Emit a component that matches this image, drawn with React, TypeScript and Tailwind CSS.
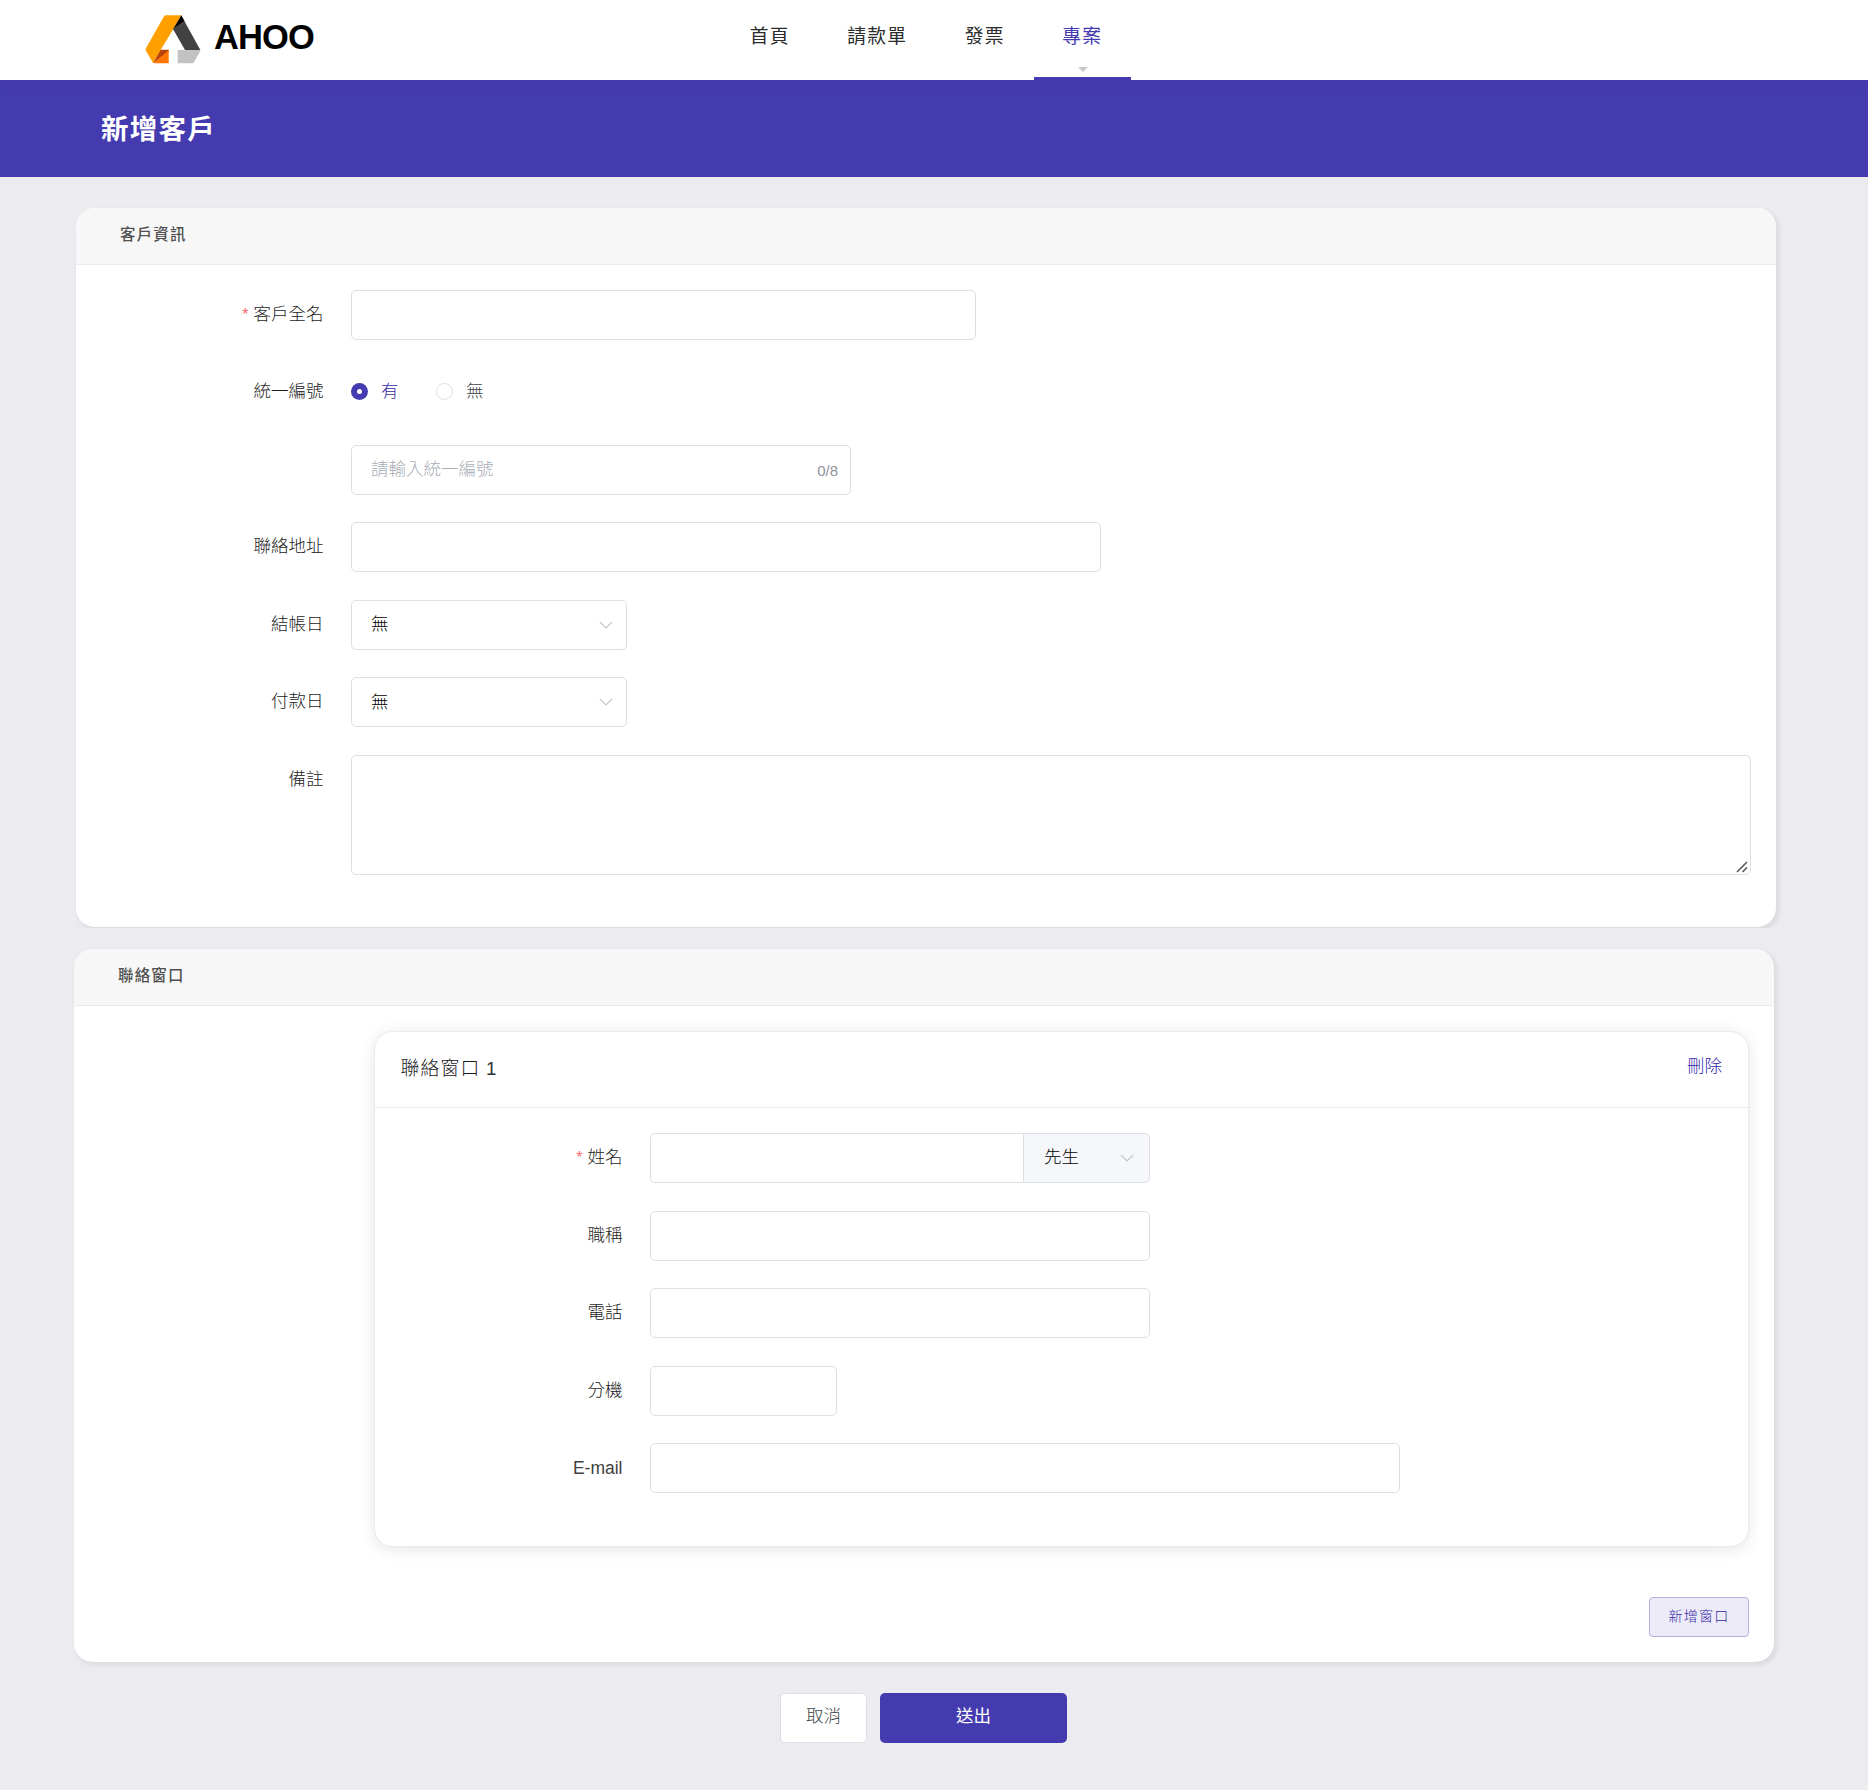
import type { ReactNode } from 'react';

const inputClass =
  'block h-[50px] rounded-[5px] border border-[#dcdfe6] bg-white px-[19px] text-[17.5px] text-[#303133] outline-none placeholder:text-[#c0c4cc]';

function Logo() {
  return (
    <div className="flex h-[50px] w-[180px]">
      <svg width="56" height="50" viewBox="0 0 168 150" className="mt-px shrink-0">
        <path d="M61 1H109L85 42L47 105L24 144L2 106V101L57 4Z" fill="#ff9f00" />
        <path d="M47 104H71V110L24 145Z" fill="#b8420c" />
        <path d="M71 106V145H25Z" fill="#ff7600" />
        <path d="M109 1L119 19L84 43Z" fill="#000" />
        <path d="M118 18L166 105H120L84 42Z" fill="#424242" />
        <path d="M98 105H166V108L146 143L142 145H98Z" fill="#c2c2c2" />
      </svg>
      <span className="mt-[5px] ml-[13px] text-[34.5px] leading-[36px] font-bold tracking-[-0.9px] text-black">AHOO</span>
    </div>
  );
}

function NavItem({ label, active = false }: { label: string; active?: boolean }) {
  return (
    <a
      className={
        active
          ? 'relative h-20 border-b-[3px] border-[#453bb0] px-[28.75px] pt-[23px] text-[#453bb0]'
          : 'h-20 px-[28.75px] pt-[23px] text-[#2c2c2c]'
      }
    >
      {label}
      {active && (
        <span className="absolute top-[67px] left-1/2 -ml-[4px] border-x-[5px] border-t-[5px] border-x-transparent border-t-[#c8c8c8]" />
      )}
    </a>
  );
}

function Field({
  label,
  required = false,
  labelWidth,
  children,
}: {
  label?: ReactNode;
  required?: boolean;
  labelWidth: string;
  children: ReactNode;
}) {
  return (
    <div className="mb-[27.5px] flex">
      <div className={`${labelWidth} shrink-0 pr-[27.5px] text-right text-[17.5px] leading-[48px] text-[#1c1c1c]`}>
        {required && <span className="mr-[5px] text-[16px] text-[#f56c6c]">*</span>}
        {label}
      </div>
      {children}
    </div>
  );
}

function Chevron() {
  return (
    <svg width="14" height="8" viewBox="0 0 14 8" fill="none" stroke="#c0c4cc" strokeWidth="1.2" className="shrink-0">
      <path d="M0.8 0.8L7 7L13.2 0.8" />
    </svg>
  );
}

function Select({ value }: { value: string }) {
  return (
    <button className="flex h-[50px] w-[276px] items-center justify-between rounded-[5px] border border-[#dcdfe6] bg-white pr-[13px] pl-[19px] text-[17.5px] text-black">
      <span className="-mt-px">{value}</span>
      <Chevron />
    </button>
  );
}

function Panel({ title, className, children }: { title: string; className: string; children: ReactNode }) {
  return (
    <section
      className={`${className} w-[1700px] overflow-hidden rounded-[19px] bg-white shadow-[2.5px_2.5px_5px_rgba(0,0,0,0.08)]`}
    >
      <h2 className="h-[57px] border-b border-[#ebebeb] bg-[#f7f7f7] pl-11 text-[15.4px] leading-[53px] font-medium tracking-[1.25px] text-[#505050]">
        {title}
      </h2>
      {children}
    </section>
  );
}

export default function App() {
  return (
    <div className="h-[1790px] w-[1868px] overflow-hidden bg-[#ecebf0] font-['Liberation_Sans','Noto_Sans_CJK_TC',sans-serif] font-light">
      <header className="relative flex h-20 bg-white pl-[145px] shadow-[0_2.5px_15px_rgba(0,0,0,0.06)]">
        <div className="flex w-[576px] pt-[14px]">
          <Logo />
        </div>
        <nav className="flex text-[18.75px] leading-[28px] font-normal tracking-[1.25px]">
          <NavItem label="首頁" />
          <NavItem label="請款單" />
          <NavItem label="發票" />
          <NavItem label="專案" active />
        </nav>
      </header>

      <div className="h-[97px] bg-[#453bb0] pl-[101px]">
        <h1 className="text-[27.5px] leading-[99px] font-bold tracking-[1.25px] text-white">新增客戶</h1>
      </div>

      <div className="h-[751px] overflow-hidden pt-[31px] pl-[76px]">
        <Panel title="客戶資訊" className="h-[719px]">
          <div className="pt-[24.9px]">
            <Field label="客戶全名" required labelWidth="w-[275px]">
              <input className={`${inputClass} w-[625px]`} />
            </Field>
            <Field label="統一編號" labelWidth="w-[275px]">
              <div className="flex h-12 items-center text-[17.5px]">
                <span className="flex size-[17px] items-center justify-center rounded-full bg-[#453bb0]">
                  <span className="size-[5px] rounded-full bg-white" />
                </span>
                <span className="ml-[13px] text-[#3429a8]">有</span>
                <span className="ml-[37.5px] size-[17px] rounded-full border border-[#dcdfe6] bg-white" />
                <span className="ml-[13px] text-[#404246]">無</span>
              </div>
              <div className="h-[50px]" />
            </Field>
            <Field labelWidth="w-[275px]">
              <div className="flex h-[50px] w-[500px] items-center justify-between rounded-[5px] border border-[#dcdfe6] pr-3 pl-[19px]">
                <input
                  placeholder="請輸入統一編號"
                  className="-mt-px w-[300px] text-[17.5px] outline-none placeholder:text-[#a8adb7]"
                />
                <span className="pt-[2px] text-[15px] text-[#909399]">0/8</span>
              </div>
            </Field>
            <Field label="聯絡地址" labelWidth="w-[275px]">
              <input className={`${inputClass} w-[750px]`} />
            </Field>
            <Field label="結帳日" labelWidth="w-[275px]">
              <Select value="無" />
            </Field>
            <Field label="付款日" labelWidth="w-[275px]">
              <Select value="無" />
            </Field>
            <Field label="備註" labelWidth="w-[275px]">
              <div className="relative">
                <textarea className="block h-[120px] w-[1400px] resize-none rounded-[5px] border border-[#dcdfe6] bg-white outline-none" />
                <svg
                  width="12"
                  height="12"
                  viewBox="0 0 12 12"
                  fill="none"
                  stroke="#5a5a5a"
                  strokeWidth="1.6"
                  className="absolute right-[3px] bottom-[2px]"
                >
                  <path d="M1 11L11 1M6.5 11L11 6.5" />
                </svg>
              </div>
            </Field>
          </div>
        </Panel>
      </div>

      <div className="pt-[21px] pl-[74px]">
        <Panel title="聯絡窗口" className="h-[713px]">
          <div className="mt-[25px] ml-[300px] h-[516px] w-[1375px] rounded-[19px] border border-[#ebeaf3] bg-white shadow-[0_2.5px_15px_rgba(0,0,0,0.1)]">
            <div className="flex h-[76px] justify-between border-b border-[#ebeaf3] pr-[26px] pl-[25.5px]">
              <h3 className="text-[18.75px] leading-[74px] tracking-[1.25px] text-[#18191b]">
                聯絡窗口 <span className="-ml-px text-[#303133]">1</span>
              </h3>
              <button className="h-[68px] text-[17.5px] text-[#3429a8]">刪除</button>
            </div>
            <div className="pt-[25px]">
              <Field label="姓名" required labelWidth="w-[275px]">
                <input className={`${inputClass} w-[373px] rounded-r-none border-r-0`} />
                <button className="flex h-[50px] w-[127px] items-center justify-between rounded-r-[5px] border border-[#dcdfe6] bg-[#f5f7fa] pr-[15px] pl-5 text-[17.5px] text-black">
                  <span className="-mt-px">先生</span>
                  <Chevron />
                </button>
              </Field>
              <Field label="職稱" labelWidth="w-[275px]">
                <input className={`${inputClass} w-[500px]`} />
              </Field>
              <Field label="電話" labelWidth="w-[275px]">
                <input className={`${inputClass} w-[500px]`} />
              </Field>
              <Field label="分機" labelWidth="w-[275px]">
                <input className={`${inputClass} w-[187px]`} />
              </Field>
              <Field
                label={<span className="inline-block pt-px leading-[48px] text-[#404040]">E-mail</span>}
                labelWidth="w-[275px]"
              >
                <input className={`${inputClass} w-[750px]`} />
              </Field>
            </div>
          </div>
          <div className="mt-[50px] flex justify-end pr-[25px]">
            <button className="h-10 w-[100px] rounded-[4px] border border-[#b5b0df] bg-[#edebf7] pb-[2px] text-[14px] tracking-[1.25px] text-[#3429a8]">
              新增窗口
            </button>
          </div>
        </Panel>
      </div>

      <div className="flex gap-[13px] pt-[31px] pl-[780px] text-[17.5px]">
        <button className="h-[50px] w-[87px] rounded-[5px] border border-[#dcdfe6] bg-white pb-[3px] text-[#404246]">
          取消
        </button>
        <button className="h-[50px] w-[187px] rounded-[5px] bg-[#453bb0] pb-[3px] font-normal text-white">送出</button>
      </div>
    </div>
  );
}
